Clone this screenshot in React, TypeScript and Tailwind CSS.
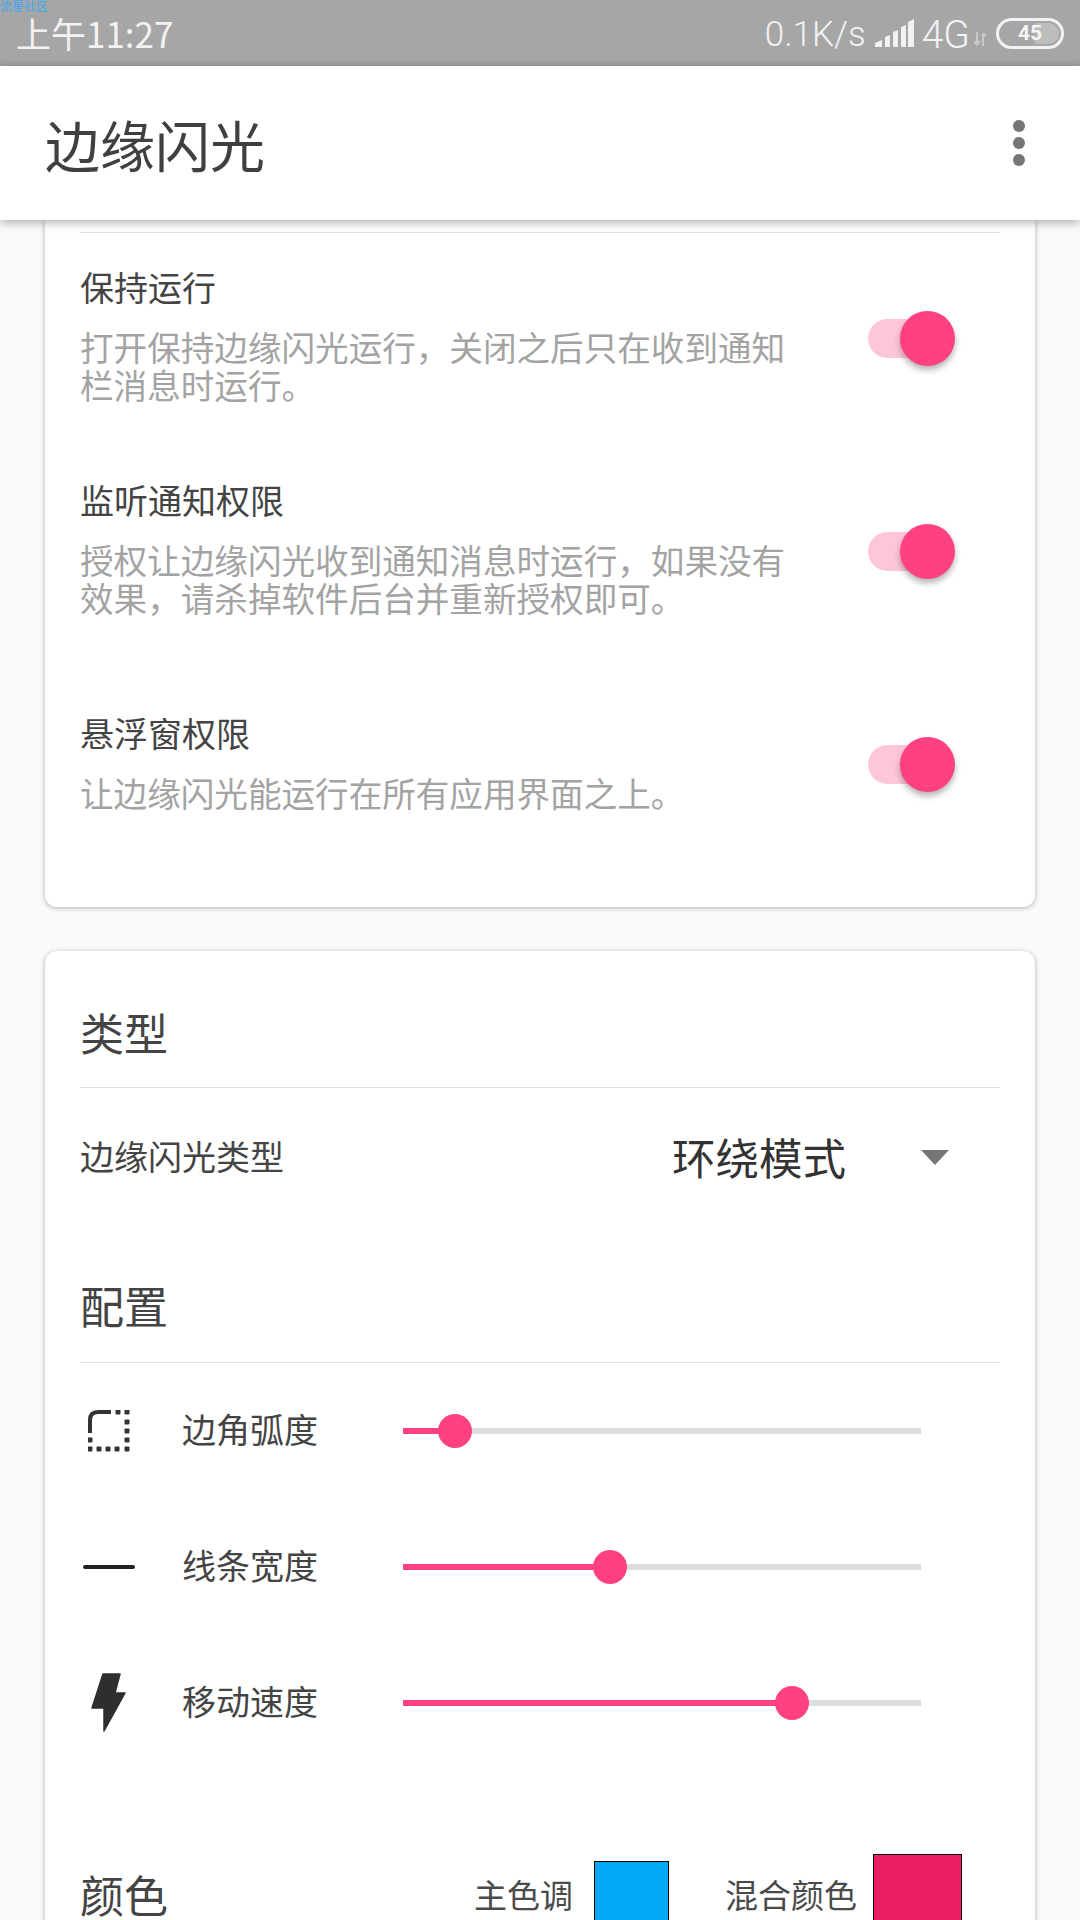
const cjk = "font-['Noto_Sans_CJK_SC','Noto_Sans',sans-serif]";

function StatusBar() {
  return (
    <div className="relative flex h-[66px] items-center justify-between bg-[#a6a6a6] pl-[16px] pr-[16px] text-[#f2f2f2]">
      <span className="absolute left-0 top-0 text-[12px] leading-[12px] text-[#3ba9f8]">流星社区</span>
      <span className="text-[35px] leading-[40px]">上午11:27</span>
      <div className="flex items-center font-['Roboto',sans-serif]">
        <span className="mt-[4px] text-[35px] font-light leading-[40px]">0.1K/s</span>
        <svg className="ml-[9px]" width="39" height="28" viewBox="0 0 39 28" fill="#f2f2f2">
          <path d="M0 28 V24 L7 21 V28 Z" />
          <path d="M10 28 V18 L15 16 V28 Z" />
          <path d="M18 28 V13 L23 11 V28 Z" />
          <path d="M26 28 V8 L31 6 V28 Z" />
          <path d="M33 28 V3 L39 0 V28 Z" />
        </svg>
        <span className="ml-[8px] mt-[4px] text-[39px] font-light leading-[40px]">4G</span>
        <svg className="ml-[4px] mt-[12px]" width="12" height="14" viewBox="0 0 12 14" stroke="#c8c8c8" strokeWidth="2" fill="none">
          <path d="M3 0 V12 M0 9 L3 13 L6 9" />
          <path d="M9 14 V2 M9 1 L12 5" />
        </svg>
        <div className="relative ml-[10px] flex h-[31px] w-[68px] items-center justify-center rounded-full border-[3px] border-[#f2f2f2]">
          <div className="absolute bottom-[2px] right-[2px] top-[2px] w-[24px] rounded-r-full bg-[#bdbdbd]" />
          <span className="relative text-[21px] font-bold leading-[24px] text-[#f5f5f5]">45</span>
        </div>
      </div>
    </div>
  );
}

function AppBar() {
  return (
    <div className="relative z-10 flex h-[154px] items-center justify-between bg-white pl-[45px] pr-[55px] shadow-[0_2px_10px_rgba(0,0,0,0.35)]">
      <h1 className="text-[55px] font-normal leading-[60px] text-[#404040]">边缘闪光</h1>
      <div className="flex flex-col gap-[5px]">
        <div className="size-[12px] rounded-full bg-[#757575]" />
        <div className="size-[12px] rounded-full bg-[#757575]" />
        <div className="size-[12px] rounded-full bg-[#757575]" />
      </div>
    </div>
  );
}

function Toggle({ top }: { top: string }) {
  return (
    <div className={`relative h-[55px] w-[87px] shrink-0 ${top}`}>
      <div className="absolute left-0 top-[8px] h-[39px] w-[78px] rounded-full bg-[#ffc6da]" />
      <div className="absolute right-0 top-0 size-[55px] rounded-full bg-[#ff4081] shadow-[0_4px_6px_rgba(0,0,0,0.3)]" />
    </div>
  );
}

function SwitchRow({ title, lines, rowClass, toggleTop }: { title: string; lines: string[]; rowClass: string; toggleTop: string }) {
  return (
    <div className={`flex justify-between pr-[45px] ${rowClass}`}>
      <div>
        <div className="text-[34px] leading-[44px] text-[#444444]">{title}</div>
        <div className="mt-[19px] text-[33.6px] leading-[38px] text-[#a3a3a3]">
          {lines.map((line) => (
            <div key={line}>{line}</div>
          ))}
        </div>
      </div>
      <Toggle top={toggleTop} />
    </div>
  );
}

function CornerIcon() {
  const dots = [
    [30, 2], [39, 2], [39, 12], [39, 21], [39, 30], [39, 39],
    [2, 39], [11, 39], [20, 39], [29, 39], [2, 30],
  ];
  return (
    <svg width="42" height="42" viewBox="0 0 42 42" fill="#333333">
      <path d="M2 23 V10 Q2 2 10 2 H23" fill="none" stroke="#333333" strokeWidth="4" />
      {dots.map(([x, y]) => (
        <rect key={`${x}-${y}`} x={x - 2.5} y={y - 2.5} width="5" height="5" rx="1" />
      ))}
    </svg>
  );
}

function BoltIcon() {
  return (
    <svg width="36" height="60" viewBox="0 0 36 60" fill="#2e2e2e" stroke="#2e2e2e" strokeWidth="1.5" strokeLinejoin="round">
      <path d="M12 1 H29 L24 20 H34 L13 58 V35 H1 Z" />
    </svg>
  );
}

function SliderRow({ icon, label, percent, rowClass }: { icon: React.ReactNode; label: string; percent: number; rowClass: string }) {
  return (
    <div className={`flex h-[44px] items-center ${rowClass}`}>
      <div className="flex w-[102px] items-center justify-center pr-[44px]">{icon}</div>
      <span className="mb-[4px] w-[221px] text-[34px] leading-[44px] text-[#444444]">{label}</span>
      <div className="relative h-[6px] w-[518px] bg-[#dcdcdc]">
        <div className="h-full bg-[#ff4081]" style={{ width: `${percent}%` }} />
        <div
          className="absolute top-[-14px] size-[34px] -translate-x-1/2 rounded-full bg-[#ff4081]"
          style={{ left: `${percent}%` }}
        />
      </div>
    </div>
  );
}

export default function App() {
  return (
    <div className={`h-[1920px] w-[1080px] overflow-hidden bg-[#fafafa] ${cjk}`}>
      <StatusBar />
      <AppBar />
      <div className="px-[45px]">
        <div className="h-[687px] rounded-b-[12px] bg-white pl-[35px] pr-[35px] pt-[12px] shadow-[0_1px_5px_rgba(0,0,0,0.3)]">
          <div className="h-px bg-[#e0e0e0]" />
          <SwitchRow
            title="保持运行"
            lines={["打开保持边缘闪光运行，关闭之后只在收到通知", "栏消息时运行。"]}
            rowClass="pt-[32px]"
            toggleTop="mt-[46px]"
          />
          <SwitchRow
            title="监听通知权限"
            lines={["授权让边缘闪光收到通知消息时运行，如果没有", "效果，请杀掉软件后台并重新授权即可。"]}
            rowClass="pt-[74px]"
            toggleTop="mt-[46px]"
          />
          <SwitchRow
            title="悬浮窗权限"
            lines={["让边缘闪光能运行在所有应用界面之上。"]}
            rowClass="pt-[94px]"
            toggleTop="mt-[26px]"
          />
        </div>

        <div className="mt-[44px] h-[1100px] rounded-t-[12px] bg-white pl-[35px] pr-[35px] shadow-[0_1px_5px_rgba(0,0,0,0.3)]">
          <h2 className="pt-[53px] text-[44px] font-normal leading-[56px] text-[#444444]">类型</h2>
          <div className="mt-[27px] h-px bg-[#e0e0e0]" />
          <div className="mt-[46px] flex h-[46px] items-center">
            <span className="mb-[2px] w-[592px] text-[34px] leading-[44px] text-[#444444]">边缘闪光类型</span>
            <span className="w-[249px] text-[43.5px] leading-[46px] text-[#333333]">环绕模式</span>
            <svg width="28" height="15" viewBox="0 0 28 15" fill="#757575">
              <path d="M0 0 H28 L14 15 Z" />
            </svg>
          </div>
          <h2 className="mt-[97px] text-[44px] font-normal leading-[56px] text-[#444444]">配置</h2>
          <div className="mt-[29px] h-px bg-[#e0e0e0]" />
          <SliderRow icon={<CornerIcon />} label="边角弧度" percent={10} rowClass="mt-[46px]" />
          <SliderRow
            icon={<div className="h-[4px] w-[52px] shrink-0 rounded-full bg-[#222222]" />}
            label="线条宽度"
            percent={40}
            rowClass="mt-[92px]"
          />
          <SliderRow icon={<BoltIcon />} label="移动速度" percent={75} rowClass="mt-[92px]" />
          <div className="mt-[129px] flex items-start">
            <h2 className="mt-[18px] w-[394px] text-[44px] font-normal leading-[44px] text-[#444444]">颜色</h2>
            <span className="mt-[18px] w-[120px] whitespace-nowrap text-[33px] leading-[44px] text-[#4a4a4a]">主色调</span>
            <div className="mt-[7px] h-[70px] w-[75px] border border-black bg-[#03a9f4]" />
            <span className="ml-[56px] mt-[18px] w-[148px] whitespace-nowrap text-[33px] leading-[44px] text-[#4a4a4a]">混合颜色</span>
            <div className="h-[80px] w-[89px] border border-black bg-[#e91e63]" />
          </div>
        </div>
      </div>
    </div>
  );
}
